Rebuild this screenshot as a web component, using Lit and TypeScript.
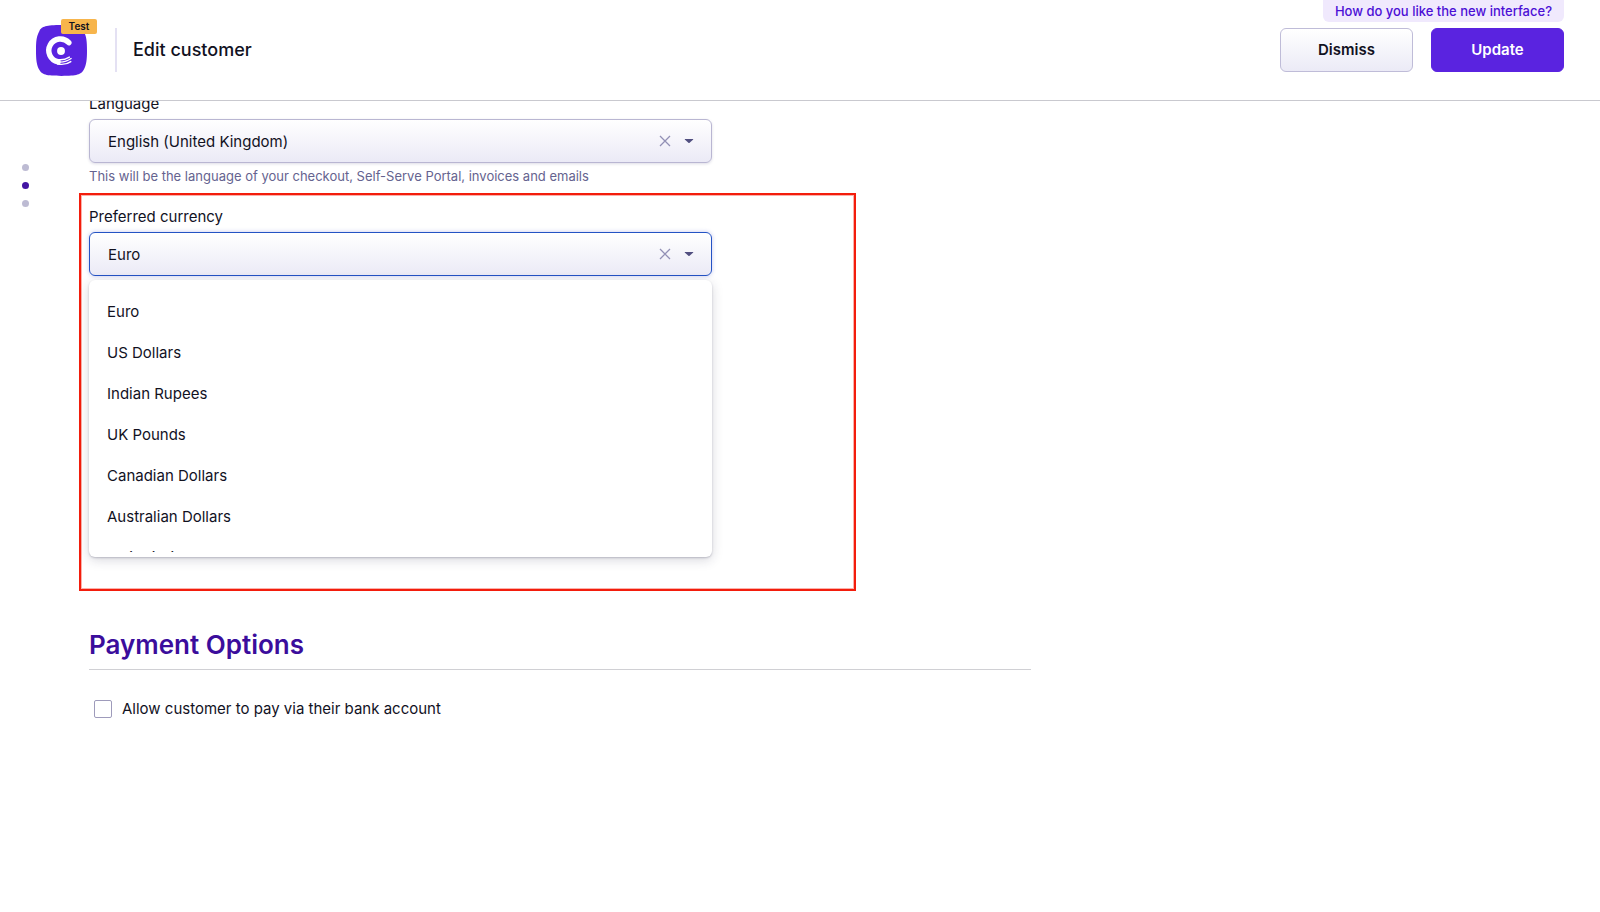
import { LitElement, html, css } from "lit";
import { customElement, property, state } from "lit/decorators.js";

const CURRENCIES = [
  "Euro",
  "US Dollars",
  "Indian Rupees",
  "UK Pounds",
  "Canadian Dollars",
  "Australian Dollars",
  "Emirati Dirham",
];

@customElement("select-field")
class SelectField extends LitElement {
  @property() label = "";
  @property() value = "";
  @property() hint = "";
  @property({ type: Array }) options: string[] = [];
  @property({ type: Boolean, reflect: true }) open = false;

  static styles = css`
    :host { display: block; }
    * { box-sizing: border-box; }
    .label { display: block; font-size: 15px; line-height: 20px; margin-bottom: 5px; }
    .box {
      display: flex; align-items: center; height: 44px;
      border: 1px solid #b9b6d2; border-radius: 6px;
      background: linear-gradient(#ffffff, #ebeaf6);
      box-shadow: 0 1px 3px rgba(30, 20, 90, 0.15);
    }
    :host([open]) .box { border-color: #2453c4; box-shadow: 0 0 4px rgba(60, 70, 200, 0.3); }
    .select {
      flex: 1; min-width: 0; height: 100%; padding: 0 18px; margin: 0;
      appearance: none; border: 0; outline: 0; background: none;
      font: inherit; font-size: 15px; color: #12121f;
    }
    .clear { display: flex; border: 0; padding: 0; background: none; margin-right: 13px; }
    .caret { display: flex; margin-right: 17px; }
    .hint { margin: 3px 0 0; font-size: 13px; line-height: 20px; color: #65638f; }
    .menu {
      margin-top: 4px; padding: 11px 0 5px; border-radius: 6px; background: #fff;
      box-shadow: 0 1px 2px rgba(40, 40, 70, 0.24), 0 3px 12px rgba(40, 40, 70, 0.18);
    }
    .list { list-style: none; margin: 0; padding: 0; height: 261px; overflow: hidden; }
    .option { padding: 0 18px; font-size: 15px; line-height: 41px; }
  `;

  render() {
    return html`
      <label class="label" for="control">${this.label}</label>
      <div class="box">
        <select class="select" id="control">
          ${(this.options.length ? this.options : [this.value]).map(
            (o) => html`<option ?selected=${o === this.value}>${o}</option>`
          )}
        </select>
        <button class="clear" type="button" aria-label="Clear">
          <svg width="12" height="12" viewBox="0 0 12 12" fill="none" stroke="#9290b5" stroke-width="1.3">
            <path d="M1 1 11 11M11 1 1 11" />
          </svg>
        </button>
        <span class="caret">
          <svg width="10" height="6" viewBox="0 0 10 6" fill="#514f80">
            <path d="M1 1H9Q9.6 1 9 1.7L5.6 4.8Q5 5.3 4.4 4.8L1 1.7Q.4 1 1 1Z" />
          </svg>
        </span>
      </div>
      ${this.hint ? html`<p class="hint">${this.hint}</p>` : ""}
      ${this.open
        ? html`<div class="menu">
            <ul class="list" role="listbox">
              ${this.options.map((o) => html`<li class="option" role="option">${o}</li>`)}
            </ul>
          </div>`
        : ""}
    `;
  }
}

@customElement("app-root")
class AppRoot extends LitElement {
  @state() private section = 1;

  static styles = css`
    :host {
      display: flex; flex-direction: column; height: 100vh; overflow: hidden;
      background: #fff; color: #12121f;
      font-family: Inter, "Liberation Sans", sans-serif; font-size: 15px;
    }
    * { box-sizing: border-box; }
    .header {
      flex: none; display: flex; align-items: center; height: 101px; padding: 0 36px;
      border-bottom: 1px solid #c9c9cf; background: #fff; position: relative; z-index: 1;
    }
    .brand { position: relative; display: flex; }
    .badge {
      position: absolute; left: 25px; top: -6px; width: 36px; border-radius: 2px;
      background: #f7b54c; font-size: 10px; line-height: 15px; font-weight: 600; text-align: center;
    }
    .divider { width: 2px; height: 44px; margin: 0 16px 0 28px; background: #e4e1f3; }
    .title { margin: 0; font-size: 18px; line-height: 24px; font-weight: 500; }
    .actions { display: flex; gap: 18px; margin-left: auto; }
    .button {
      width: 133px; height: 44px; border-radius: 6px; border: 1px solid #bfbcd8;
      background: linear-gradient(#ffffff, #ebeaf6); color: #12121f;
      font: 600 15px/20px Inter, sans-serif;
    }
    .primary { background: #5a23e0; border-color: #5a23e0; color: #fff; }
    .feedback {
      position: absolute; top: 0; right: 36px; padding: 0 12px; border-radius: 0 0 6px 6px;
      background: #f0e9fd; color: #4c0fd6; font-size: 13px; font-weight: 500; line-height: 22px;
      text-decoration: none;
    }
    .body { flex: 1; min-height: 0; display: flex; }
    .steps { flex: none; display: flex; flex-direction: column; gap: 11px; width: 79px; padding: 63px 0 0 22px; }
    .step { width: 7px; height: 7px; padding: 0; border: 0; border-radius: 50%; background: #bdbbd3; }
    .step.current { background: #4315a3; }
    .content { flex: 1; min-width: 0; }
    .language { max-width: 633px; margin-top: -7px; padding-left: 10px; }
    .highlight {
      max-width: 777px; margin-top: 7px; padding: 12px 0 32px 8px;
      border: 2px solid #f31d0c; box-shadow: inset 0 0 0 1px rgba(243, 29, 12, 0.35);
    }
    .currency { max-width: 623px; }
    .payment { max-width: 952px; padding-left: 10px; margin-top: 38px; }
    .heading {
      margin: 0; padding-bottom: 8px; border-bottom: 1px solid #d0d0d4;
      font-size: 26px; line-height: 32px; font-weight: 600; color: #3b0d9c;
    }
    .check { display: flex; align-items: center; gap: 10px; margin: 29px 0 0 5px; line-height: 20px; }
    .box { appearance: none; width: 18px; height: 18px; margin: 0; border: 1px solid #9e9bbb; border-radius: 2px; background: #fff; }
  `;

  render() {
    return html`
      <header class="header">
        <div class="brand">
          <svg width="51" height="51" viewBox="0 0 52 52" role="img" aria-label="Home">
            <path fill="#5a23e0" d="M26 0C42 0 46 1.500 48.500 6 51.500 11 52 17 52 26S51.500 41 48.500 46C46 50.500 42 52 26 52S6 50.500 3.500 46C.500 41 0 35 0 26S.500 11 3.500 6C6 1.500 10 0 26 0Z" />
            <path d="M33.500 18A11.800 11.800 0 1 0 22.500 37.600" fill="none" stroke="#fff" stroke-width="5.500" stroke-linecap="round" />
            <circle cx="25.500" cy="26.500" r="4" fill="#fff" />
            <g fill="none" stroke="#fff" stroke-linecap="round" stroke-width="1.400">
              <path d="M21 35Q28 36.500 34 32.700" />
              <path d="M22 37.700Q30 38.500 35.800 34.200" />
              <path d="M22 39.800Q30 41.300 35.500 37.300" />
            </g>
          </svg>
          <span class="badge">Test</span>
        </div>
        <span class="divider"></span>
        <h1 class="title">Edit customer</h1>
        <div class="actions">
          <button class="button" type="button">Dismiss</button>
          <button class="button primary" type="button">Update</button>
        </div>
        <a class="feedback" href="#feedback">How do you like the new interface?</a>
      </header>
      <div class="body">
        <nav class="steps" aria-label="Sections">
          ${[0, 1, 2].map(
            (i) => html`<button
              class="step ${i === this.section ? "current" : ""}"
              aria-label="Section ${i + 1}"
              @click=${() => (this.section = i)}
            ></button>`
          )}
        </nav>
        <main class="content">
          <div class="language">
            <select-field
              label="Language"
              value="English (United Kingdom)"
              hint="This will be the language of your checkout, Self-Serve Portal, invoices and emails"
            ></select-field>
          </div>
          <section class="highlight">
            <select-field class="currency" label="Preferred currency" value="Euro" open .options=${CURRENCIES}></select-field>
          </section>
          <section class="payment">
            <h2 class="heading">Payment Options</h2>
            <label class="check"><input class="box" type="checkbox" />Allow customer to pay via their bank account</label>
          </section>
        </main>
      </div>
    `;
  }
}
